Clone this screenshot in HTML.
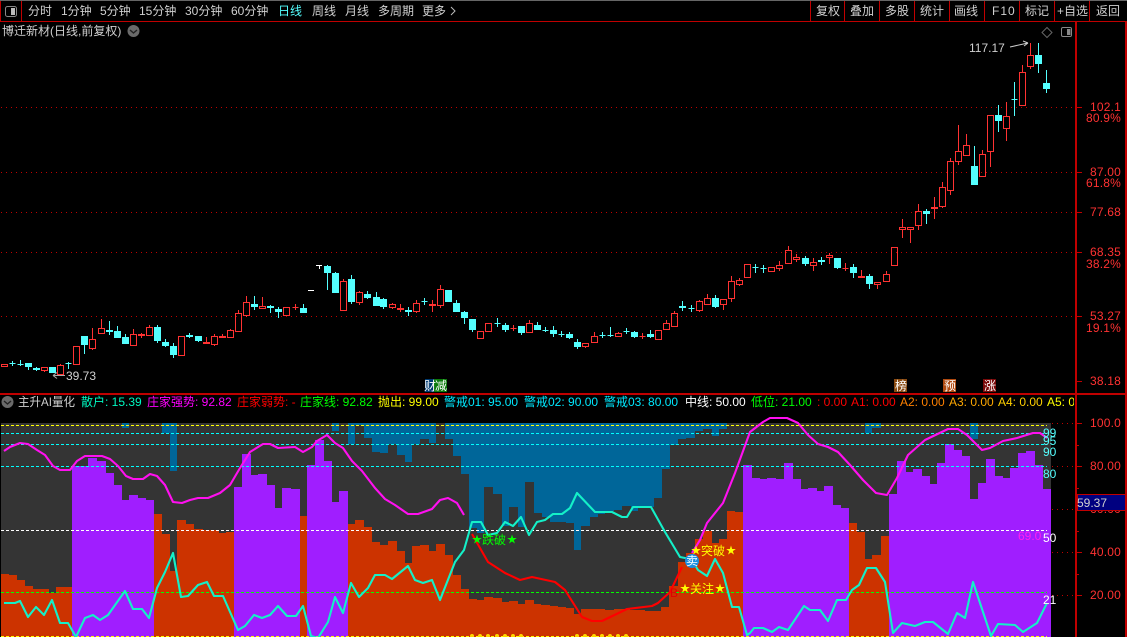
<!DOCTYPE html>
<html><head><meta charset="utf-8"><title>博迁新材</title>
<style>
html,body{margin:0;padding:0;background:#000;width:1127px;height:637px;overflow:hidden}
svg{display:block;position:absolute;left:0;top:0}
text{font-family:"Liberation Sans","WenQuanYi Zen Hei","Noto Sans CJK SC",sans-serif;font-size:12px;white-space:pre}
.t{fill:#d0d0d0}
.a{fill:#ff3232;text-anchor:end;letter-spacing:.2px}
.s{font-size:10px}
</style></head><body>
<svg width="1127" height="637" viewBox="0 0 1127 637" xmlns="http://www.w3.org/2000/svg">
<rect width="1127" height="637" fill="#000"/>
<rect width="1127" height="1" fill="#666"/>
<g fill="none" stroke="#c00000" shape-rendering="crispEdges">
<path d="M0 21.500H1127M21.500 1V21M0.500 1V21M810.500 1V21M844.500 1V21M879.500 1V21M914.500 1V21M949.500 1V21M984.500 1V21M1019.500 1V21M1054.500 1V21M1089.500 1V21"/>
</g>
<rect x="1075" y="21" width="2" height="616" fill="#c00000"/>
<rect x="1125" y="21" width="2" height="616" fill="#c00000"/>
<rect x="0" y="393" width="1127" height="2" fill="#c00000"/>
<!-- toolbar -->
<rect x="5.500" y="6.500" width="11" height="10" rx="2" fill="#000" stroke="#888"/><rect x="11" y="8" width="4" height="7" fill="#bbb"/>
<g class="t">
<text x="28" y="15" class="t">分时</text><text x="61" y="15" class="t">1分钟</text><text x="100" y="15" class="t">5分钟</text><text x="139" y="15" class="t">15分钟</text><text x="185" y="15" class="t">30分钟</text><text x="231" y="15" class="t">60分钟</text><text x="278" y="15" style="fill:#54ffff">日线</text><text x="312" y="15" class="t">周线</text><text x="345" y="15" class="t">月线</text><text x="378" y="15" class="t">多周期</text><text x="422" y="15" class="t">更多</text>
<text x="816" y="15" class="t">复权</text><text x="850" y="15" class="t">叠加</text><text x="885" y="15" class="t">多股</text><text x="920" y="15" class="t">统计</text><text x="954" y="15" class="t">画线</text><text x="992" y="15" class="t" style="letter-spacing:1px">F10</text><text x="1025" y="15" class="t">标记</text><text x="1057" y="15" class="t">+自选</text><text x="1096" y="15" class="t">返回</text>
<text x="2" y="35" class="t">博迁新材(日线,前复权)</text>
</g>
<path d="M451 7l4 4-4 4" fill="none" stroke="#bbb"/>
<circle cx="133.500" cy="31" r="6" fill="#6a6a6a"/><path d="M130 30l3.500 3 3.500-3" fill="none" stroke="#222" stroke-width="1.400"/>
<path d="M1047 27.500l5 5-5 5-5-5z" fill="none" stroke="#666"/>
<rect x="1061.500" y="27.500" width="10" height="9" rx="1.500" fill="#000" stroke="#888"/><rect x="1067" y="29" width="3.500" height="6" fill="#888"/>
<!-- top panel grid -->
<g fill="none" stroke="#c00000" shape-rendering="crispEdges">
<path stroke-dasharray="1 4" d="M1 107.500H1075M1 172.500H1075M1 212.500H1075M1 252.500H1075M1 316.500H1075"/>
<path d="M1077 107.500h5M1077 172.500h5M1077 212.500h5M1077 252.500h5M1077 316.500h5M1077 381.500h5M1077 423.500h5M1077 466.500h5M1077 509.500h5M1077 552.500h5M1077 595.500h5M1077 445.500h2M1077 488.500h2M1077 531.500h2M1077 574.500h2"/>
</g>
<!-- candles -->
<g shape-rendering="crispEdges">
<path fill="none" stroke="#ff3232" d="M1.500 364.500h6v2h-6zM41.500 367.500h6v3h-6zM44.500 371V372M57.500 365.500h6v9h-6zM60.500 364V365M73.500 346.500h6v18h-6zM89.500 339.500h6v9h-6zM92.500 328V339M92.500 349V350M98.500 328.500h6v5h-6zM101.500 319V328M130.500 334.500h6v11h-6zM133.500 329V334M138.500 334.500h6v1h-6zM141.500 333V338M146.500 327.500h6v8h-6zM149.500 325V327M178.500 336.500h6v19h-6zM203.500 342.500h6v1h-6zM206.500 337V342M211.500 336.500h6v8h-6zM214.500 334V336M214.500 345V346M219.500 336.500h6v1h-6zM222.500 334V336M227.500 330.500h6v7h-6zM230.500 329V330M235.500 313.500h6v18h-6zM238.500 310V313M243.500 302.500h6v13h-6zM246.500 296V302M246.500 316V317M259.500 306.500h6v2h-6zM262.500 297V306M283.500 307.500h6v8h-6zM292.500 307.500h6M295.500 304V310M340.500 281.500h6v29h-6zM343.500 279V281M356.500 292.500h6v10h-6zM359.500 291V292M359.500 303V305M389.500 304.500h6v3h-6zM392.500 303V304M392.500 308V309M397.500 308.500h6v1h-6zM400.500 304V308M400.500 310V312M413.500 303.500h6v8h-6zM416.500 300V303M416.500 312V313M429.500 304.500h6v1h-6zM432.500 300V304M432.500 306V312M437.500 289.500h6v16h-6zM440.500 285V289M440.500 306V308M477.500 331.500h6v7h-6zM485.500 323.500h6v8h-6zM510.500 328.500h6M513.500 325V331M526.500 323.500h6v9h-6zM529.500 320V323M582.500 343.500h6v3h-6zM585.500 347V348M591.500 336.500h6v6h-6zM594.500 332V336M615.500 333.500h6v3h-6zM618.500 332V333M639.500 336.500h6M642.500 333V339M655.500 330.500h6v9h-6zM663.500 323.500h6v6h-6zM666.500 320V323M671.500 313.500h6v13h-6zM674.500 311V313M696.500 301.500h6v9h-6zM699.500 300V301M699.500 311V312M704.500 298.500h6v6h-6zM707.500 294V298M720.500 299.500h6v5h-6zM723.500 305V310M728.500 281.500h6v17h-6zM731.500 276V281M731.500 299V302M736.500 280.500h6v4h-6zM739.500 278V280M739.500 285V286M744.500 264.500h6v13h-6zM768.500 267.500h6v4h-6zM776.500 265.500h6v3h-6zM779.500 261V265M779.500 269V271M785.500 250.500h6v13h-6zM788.500 246V250M793.500 257.500h6v2h-6zM796.500 254V257M796.500 260V262M810.500 262.500h6v3h-6zM813.500 258V262M813.500 266V271M826.500 255.500h6v2h-6zM829.500 253V255M829.500 258V264M842.500 268.500h6M845.500 263V271M858.500 276.500h6v1h-6zM861.500 270V276M874.500 282.500h6v2h-6zM877.500 285V289M883.500 274.500h6v7h-6zM886.500 271V274M891.500 247.500h6v18h-6zM899.500 227.500h6v2h-6zM902.500 219V227M902.500 230V238M907.500 227.500h6v2h-6zM910.500 230V243M915.500 211.500h6v14h-6zM918.500 204V211M918.500 226V230M931.500 207.500h6v1h-6zM934.500 197V207M934.500 209V219M939.500 187.500h6v19h-6zM942.500 182V187M942.500 207V208M947.500 161.500h6v29h-6zM950.500 158V161M950.500 191V195M955.500 151.500h6v10h-6zM958.500 125V151M958.500 162V165M963.500 145.500h6v10h-6zM966.500 134V145M979.500 154.500h6v22h-6zM982.500 150V154M987.500 115.500h6v36h-6zM990.500 152V167M1003.500 116.500h6v12h-6zM1006.500 102V116M1006.500 129V141M1019.500 72.500h6v33h-6zM1022.500 65V72M1027.500 55.500h6v11h-6zM1030.500 43V55M1030.500 67V69"/>
<path fill="#54ffff" stroke="#54ffff" d="M9.500 363.500h6M12.500 361V366M17.500 364.500h6M20.500 360V366M25.500 363.500h6v3h-6zM28.500 367V370M33.500 368.500h6v1h-6zM36.500 367V371M49.500 367.500h6v5h-6zM65.500 363.500h6M68.500 362V369M81.500 336.500h6v8h-6zM84.500 345V354M106.500 330.500h6v1h-6zM109.500 321V335M114.500 331.500h6v6h-6zM117.500 326V331M122.500 337.500h6v6h-6zM125.500 334V337M154.500 327.500h6v13h-6zM157.500 325V327M157.500 341V343M162.500 342.500h6v3h-6zM165.500 339V342M165.500 346V347M170.500 346.500h6v8h-6zM173.500 343V346M173.500 355V358M186.500 335.500h6v1h-6zM189.500 333V338M195.500 336.500h6v4h-6zM198.500 341V342M251.500 304.500h6v2h-6zM254.500 296V304M254.500 307V310M267.500 306.500h6v1h-6zM270.500 305V313M275.500 309.500h6v2h-6zM278.500 307V309M278.500 312V318M300.500 308.500h6v4h-6zM303.500 304V308M324.500 266.500h6v6h-6zM327.500 265V266M327.500 273V290M332.500 273.500h6v19h-6zM335.500 272V273M348.500 279.500h6v22h-6zM351.500 275V279M351.500 302V304M364.500 294.500h6v3h-6zM367.500 291V294M367.500 298V299M373.500 297.500h6v8h-6zM376.500 292V297M380.500 299.500h6v7h-6zM383.500 298V299M383.500 307V309M405.500 310.500h6v1h-6zM408.500 307V316M421.500 301.500h6M424.500 298V305M445.500 290.500h6v11h-6zM453.500 303.500h6v8h-6zM456.500 300V303M461.500 312.500h6v5h-6zM464.500 311V312M464.500 318V324M469.500 319.500h6v10h-6zM472.500 330V332M494.500 323.500h6M497.500 318V327M502.500 325.500h6v4h-6zM505.500 323V325M505.500 330V332M518.500 326.500h6v6h-6zM521.500 333V335M534.500 325.500h6v4h-6zM537.500 322V325M542.500 330.500h6M545.500 327V332M550.500 330.500h6v3h-6zM553.500 326V330M553.500 334V337M558.500 334.500h6M561.500 331V337M566.500 334.500h6v3h-6zM569.500 332V334M569.500 338V339M574.500 342.500h6v4h-6zM577.500 339V342M577.500 347V349M599.500 335.500h6M602.500 332V338M607.500 335.500h6M610.500 327V337M623.500 331.500h6M626.500 328V334M631.500 332.500h6v4h-6zM634.500 331V332M634.500 337V338M647.500 334.500h6v2h-6zM650.500 330V334M650.500 337V338M679.500 306.500h6v1h-6zM682.500 301V311M688.500 308.500h6M691.500 305V312M712.500 298.500h6v8h-6zM715.500 295V298M715.500 307V308M752.500 267.500h6M755.500 264V273M760.500 268.500h6M763.500 265V273M802.500 258.500h6v5h-6zM805.500 256V258M805.500 264V266M818.500 260.500h6v1h-6zM821.500 257V265M834.500 258.500h6v9h-6zM837.500 268V269M850.500 267.500h6v5h-6zM853.500 264V267M853.500 273V278M866.500 276.500h6v7h-6zM869.500 274V276M869.500 284V289M923.500 211.500h6v2h-6zM926.500 209V211M926.500 214V224M971.500 166.500h6v18h-6zM974.500 146V166M995.500 115.500h6v5h-6zM998.500 105V115M998.500 121V132M1011.500 99.500h6M1014.500 82V116M1035.500 55.500h6v8h-6zM1038.500 43V55M1038.500 64V73M1043.500 83.500h6v5h-6zM1046.500 70V83M1046.500 89V93"/>
<path fill="none" stroke="#fff" d="M308 290.500h6M316 265.500h6M319.500 265V269"/>
</g>
<!-- annotations top -->
<text x="66" y="380" class="t">39.73</text>
<path d="M53 375.500H65M53 375.500l4-3M53 375.500l4 3" fill="none" stroke="#aaa"/>
<text x="969" y="52" class="t">117.17</text>
<path d="M1010 47l18-4M1028 43l-5-2M1028 43l-4 3" fill="none" stroke="#ccc"/>
<!-- tags -->
<rect x="425" y="379" width="9" height="13" fill="#003a70"/><rect x="434" y="379" width="13" height="13" fill="#0a7a0a"/>
<text x="424" y="390" fill="#fff">财</text><text x="435" y="390" fill="#fff">减</text>
<rect x="894" y="379" width="13" height="13" fill="#8a4a10"/><text x="895" y="390" fill="#fff">榜</text>
<rect x="943" y="379" width="13" height="13" fill="#b04a10"/><text x="944" y="390" fill="#fff">预</text>
<rect x="983" y="379" width="13" height="13" fill="#7a0a0a"/><text x="984" y="390" fill="#fff">涨</text>
<!-- axis labels top -->
<text class="a" x="1121" y="111">102.1</text><text class="a" x="1121" y="122">80.9%</text>
<text class="a" x="1121" y="176">87.00</text><text class="a" x="1121" y="187">61.8%</text>
<text class="a" x="1121" y="216">77.68</text>
<text class="a" x="1121" y="256">68.35</text><text class="a" x="1121" y="268">38.2%</text>
<text class="a" x="1121" y="320">53.27</text><text class="a" x="1121" y="332">19.1%</text>
<text class="a" x="1121" y="385">38.18</text>
<!-- sub-panel title -->
<circle cx="7.500" cy="402" r="6" fill="#6a6a6a"/><path d="M4 401l3.500 3 3.500-3" fill="none" stroke="#222" stroke-width="1.400"/>
<text x="18" y="406" class="t" textLength="57" lengthAdjust="spacingAndGlyphs">主升AI量化</text>
<text x="81" y="406" fill="#00f8c0">散户: 15.39</text>
<text x="147" y="406" fill="#ff00ff">庄家强势: 92.82</text>
<text x="237" y="406" fill="#ff0000">庄家弱势: -</text>
<text x="300" y="406" fill="#00ff00">庄家线: 92.82</text>
<text x="378" y="406" fill="#ffff00">抛出: 99.00</text>
<text x="444" y="406" fill="#00e8ff">警戒01: 95.00</text>
<text x="524" y="406" fill="#00e8ff">警戒02: 90.00</text>
<text x="604" y="406" fill="#00e8ff">警戒03: 80.00</text>
<text x="685" y="406" fill="#ffffff">中线: 50.00</text>
<text x="751" y="406" fill="#00ff00">低位: 21.00</text>
<text x="817" y="406" fill="#ff0000">: 0.00</text>
<text x="851" y="406" fill="#ff0000">A1: 0.00</text>
<text x="900" y="406" fill="#ff8000">A2: 0.00</text>
<text x="949" y="406" fill="#ffa800">A3: 0.00</text>
<text x="998" y="406" fill="#ffd000">A4: 0.00</text>
<text x="1047" y="406" fill="#ffff00">A5: 0</text>
<rect x="1074" y="395" width="1" height="20" fill="#000"/>
<!-- sub-panel bars -->
<g shape-rendering="crispEdges">
<rect x="1" y="423" width="1050" height="214" fill="#343434"/>
<path fill="#cc3300" d="M1 637V574H9V575H17V580H25V586H33V589H49V593H56V587H72V637ZM154 637V514H162V534H170V571H177V520H186V524H194V529H203V530H219V533H226V532H234V637ZM300 637V516H307V637ZM348 637V524H355V520H364V527H372V542H380V545H388V541H397V551H405V563H412V546H420V545H429V551H436V544H445V555H453V575H461V589H469V599H477V600H484V597H493V598H502V602H509V601H518V604H525V600H534V604H541V605H550V606H558V607H566V608H574V614H581V609H605V610H614V609H630V610H645V611H661V607H669V586H678V562H686V553H695V539H703V531H712V543H719V539H727V511H735V512H743V637ZM849 637V523H857V532H865V559H872V555H881V536H889V637Z"/>
<path fill="#a01eff" d="M72 637V466H88V458H97V461H106V473H114V485H122V500H129V495H138V498H146V500H154V637ZM234 637V487H242V454H251V475H258V474H267V485H275V508H282V488H291V489H300V637ZM307 637V465H315V440H324V461H332V502H339V491H348V637ZM743 637V465H752V478H760V479H767V478H776V479H784V463H793V479H801V489H808V488H817V491H824V486H833V505H841V508H849V637ZM889 637V494H897V461H906V472H913V469H922V476H930V484H937V463H945V444H954V450H962V456H970V499H978V483H986V459H995V476H1003V478H1010V468H1018V453H1026V451H1035V465H1043V489H1051V637Z"/>
<path fill="#006699" d="M122 423V428H129V423ZM162 423V433H170V471H177V423ZM332 423V431H339V423ZM348 423V444H355V425H364V438H372V452H380V453H388V444H397V455H405V462H412V444H420V439H429V443H436V423ZM445 423V439H453V456H461V474H469V528H477V533H484V487H493V494H502V526H509V507H518V527H525V482H534V513H542V517H550V522H566V523H574V550H581V526H590V517H598V514H605V511H614V510H622V506H631V511H638V507H654V498H662V469H670V445H678V439H686V438H695V431H703V429H712V436H719V429H727V423ZM865 423V433H872V428H881V423ZM970 423V439H978V423Z"/>
<g fill="none" stroke-dasharray="3 2">
<path stroke="#ffff00" d="M1 425.500H1047"/>
<path stroke="#00ffff" d="M1 433.500H1047M1 444.500H1047M1 466.500H1047"/>
<path stroke="#ffffff" d="M1 530.500H1047"/>
<path stroke="#00ff00" d="M1 592.500H1047"/>
<path stroke="#ffff00" d="M1 636.500H1047"/>
</g>
<path fill="none" stroke="#c00000" stroke-dasharray="1 4" d="M1052 423.500H1075M1052 466.500H1075M1052 509.500H1075M1052 552.500H1075M1052 595.500H1075"/>
</g>
<!-- bottom dots -->
<g fill="#ffd800"><circle cx="472" cy="636" r="2"/><circle cx="480" cy="636" r="2"/><circle cx="488" cy="636" r="2"/><circle cx="497" cy="636" r="2"/><circle cx="505" cy="636" r="2"/><circle cx="513" cy="636" r="2"/><circle cx="521" cy="636" r="2"/><circle cx="577" cy="636" r="2"/><circle cx="585" cy="636" r="2"/><circle cx="594" cy="636" r="2"/><circle cx="602" cy="636" r="2"/><circle cx="610" cy="636" r="2"/><circle cx="618" cy="636" r="2"/><circle cx="626" cy="636" r="2"/></g>
<!-- lines -->
<g fill="none" stroke-width="2.100" stroke-linejoin="round">
<polyline stroke="#ff10f0" points="4,451 10,447 20,443 28,444 37,450 45,455 53,466 60,470 70,470 77,461 85,456 102,456 110,459 118,466 126,476 133,479 143,479 150,474 157,476 165,485 173,502 182,503 190,500 198,498 208,498 220,493 230,485 240,468 250,452 263,444 270,444 278,448 295,447 303,452 312,447 317,441 327,435 335,443 343,448 352,461 362,471 375,488 385,499 395,505 408,514 418,514 432,509 440,500 448,498 457,503 464,515"/>
<polyline stroke="#ff10f0" points="692,553 700,540 707,523 723,503 735,473 750,432 763,422 770,418 787,418 798,423 808,435 818,444 828,447 838,452 850,465 863,480 876,493 887,495 897,478 908,455 925,440 948,429 958,429 967,435 982,450 990,448 1003,441 1017,438 1033,433 1040,433 1047,438"/>
<polyline stroke="#ff0000" points="472,534 488,562 505,573 520,580 532,577 555,582 565,590 582,617 592,621 602,621 627,609 652,606 658,603 670,592 682,567"/>
<polyline stroke="#14f0c8" points="4,603 15,603 20,601 28,617 36,607 44,615 52,600 60,623 68,623 76,637 85,618 93,615 100,620 108,615 125,591 133,609 142,609 149,618 157,588 165,572 173,553 181,597 188,596 198,585 207,582 214,596 223,596 238,630 245,626 254,615 262,618 270,615 278,606 287,616 296,616 303,606 311,636 318,638 328,622 335,597 343,613 351,583 359,597 368,588 375,575 385,575 392,579 408,566 415,580 423,583 432,580 440,600 455,562 464,550 472,522 481,522 488,535 497,533 505,522 513,526 521,517 529,535 537,522 545,520 553,514 562,514 570,508 577,493 595,512 612,512 622,517 627,517 633,507 651,507 665,532 680,557 685,558 692,560 698,570 707,576 715,559 723,573 732,607 739,607 747,635 750,633 754,628 763,628 772,632 779,627 788,630 804,606 810,610 820,610 828,621 837,600 846,600 852,590 859,585 867,568 876,568 885,582 893,633 902,623 915,626 925,622 933,622 948,634 957,613 965,618 973,582 991,636 998,624 1015,625 1023,632 1037,623 1047,603"/>
</g>
<!-- signals -->
<text x="472" y="543" fill="#00ff00" class="s">★</text><text x="482" y="544" fill="#00ff00">跌破</text><text x="507" y="543" fill="#00ff00" class="s">★</text>
<text x="691" y="554" fill="#ffff00" class="s">★</text><text x="701" y="555" fill="#ffff00">突破</text><text x="726" y="554" fill="#ffff00" class="s">★</text>
<text x="680" y="592" fill="#ffff00" class="s">★</text><text x="690" y="593" fill="#ffff00">关注</text><text x="715" y="592" fill="#ffff00" class="s">★</text>
<text x="670" y="597" fill="#e00000">B</text>
<circle cx="692" cy="561" r="7" fill="#1a8fe0"/>
<text x="686" y="565" fill="#fff">卖</text>
<!-- chart labels -->
<text x="1043" y="437" fill="#54ffff">99</text>
<text x="1043" y="445" fill="#54ffff">95</text>
<text x="1043" y="456" fill="#54ffff">90</text>
<text x="1043" y="478" fill="#54ffff">80</text>
<text x="1018" y="540" fill="#ff20f0">69.0</text>
<text x="1043" y="542" fill="#fff">50</text>
<text x="1043" y="604" fill="#fff">21</text>
<!-- sub axis -->
<text class="a" x="1121" y="427">100.0</text>
<text class="a" x="1121" y="470">80.00</text>
<text class="a" x="1121" y="513">60.00</text>
<text class="a" x="1121" y="556">40.00</text>
<text class="a" x="1121" y="599">20.00</text>
<g shape-rendering="crispEdges"><rect x="1077.500" y="494.500" width="48" height="16" fill="#000080" stroke="#c00000"/></g>
<text x="1077" y="507" fill="#d0d0d0">59.37</text>
</svg>
</body></html>
